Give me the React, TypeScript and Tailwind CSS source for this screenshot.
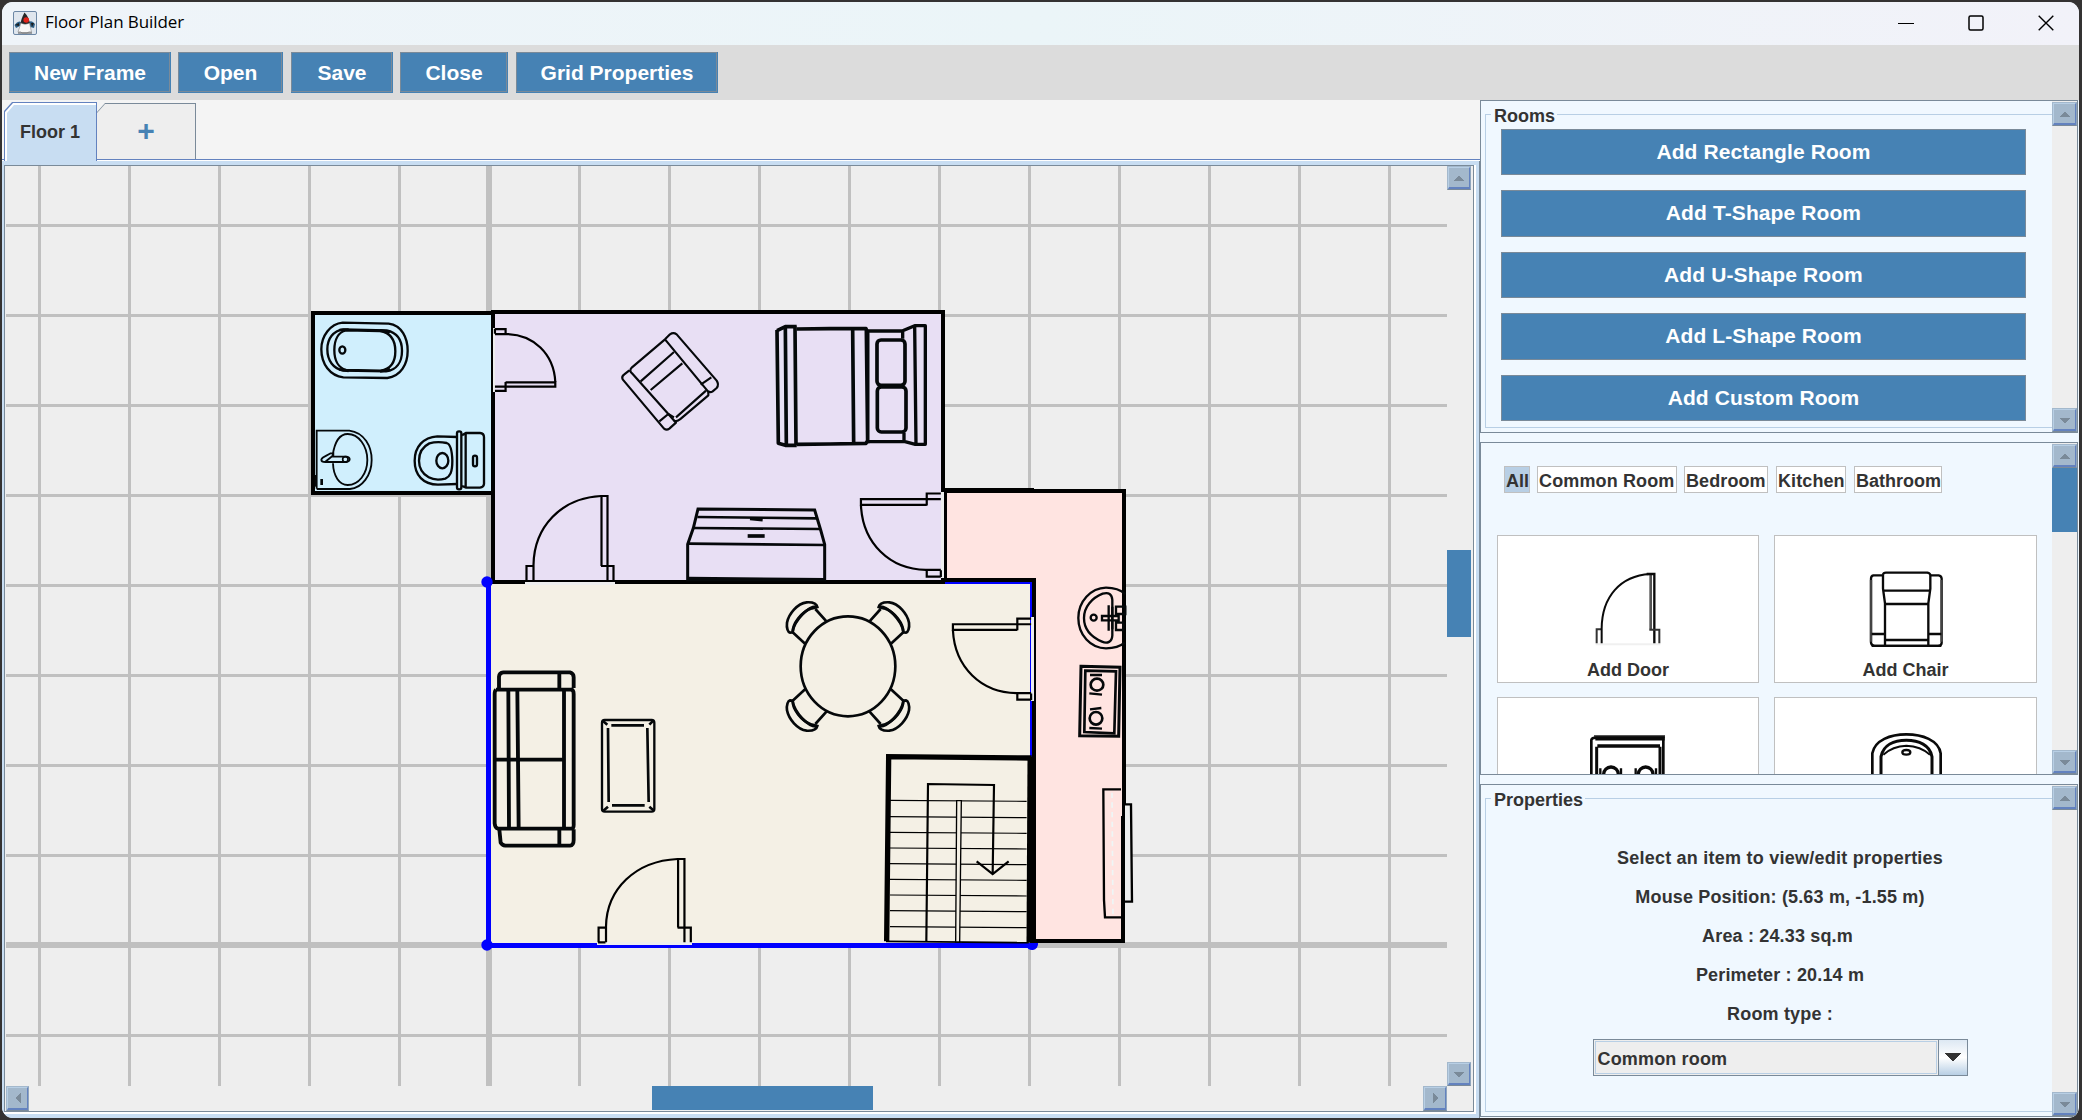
import React from "react";

const ROOM_BUTTONS = [
  { label: "Add Rectangle Room", cls: "h-[46px]" },
  { label: "Add T-Shape Room", cls: "h-[47px]" },
  { label: "Add U-Shape Room", cls: "h-[46px]" },
  { label: "Add L-Shape Room", cls: "h-[47px]" },
  { label: "Add Custom Room", cls: "h-[46px]" },
];

const TOOLBAR = [
  { label: "New Frame", cls: "w-[162px] mr-[7px]" },
  { label: "Open", cls: "w-[105px] mr-2" },
  { label: "Save", cls: "w-[102px] mr-[7px]" },
  { label: "Close", cls: "w-[108px] mr-2" },
  { label: "Grid Properties", cls: "w-[202px]" },
];

const FILTERS = [
  { label: "All", cls: "w-[26px] bg-[#b8cfe5] mr-[7px]" },
  { label: "Common Room", cls: "w-[140px] bg-white mr-[7px] tracking-[0.13px]" },
  { label: "Bedroom", cls: "w-[84px] bg-white mr-2 tracking-[0.1px]" },
  { label: "Kitchen", cls: "w-[70px] bg-white mr-2 tracking-[0.1px]" },
  { label: "Bathroom", cls: "w-[88px] bg-white" },
];

type Dir = "up" | "down" | "left" | "right";
const ARROWS: Record<Dir, string> = {
  up: "7,15 12,9.5 17,15",
  down: "6,9.5 18,9.5 12,15.5",
  left: "15,6 15,18 9.5,12",
  right: "9.5,6 9.5,18 15,12",
};

function ArrowButton({ dir, cls = "h-[24px] w-[25px]" }: { dir: Dir; cls?: string }) {
  return (
    <div className={`flex shrink-0 border border-l-[#a3b8cc] border-t-[#a3b8cc] border-r-[#8fa5bd] border-b-[#7a8a99] bg-[#a3b8cc] ${cls}`}>
      <div className="flex min-w-0 flex-1 items-center justify-center border border-b-2 border-l-[#b8cfe5] border-t-[#b8cfe5] border-r-[#6382bf] border-b-[#6382bf]">
        <svg viewBox="0 0 24 24" className="h-[24px] w-[24px] shrink-0" shapeRendering="crispEdges">
          <polygon points={ARROWS[dir]} fill="#7a8a99" />
        </svg>
      </div>
    </div>
  );
}

function VScroll({ thumb }: { thumb?: boolean }) {
  return (
    <div className="flex w-[25px] shrink-0 flex-col justify-between bg-[#eeeeee] pt-px">
      <div>
        <ArrowButton dir="up" />
        {thumb && <div className="h-[64px] bg-[#4682b4]" />}
      </div>
      <ArrowButton dir="down" />
    </div>
  );
}

/* Door in its own 90 x 86 box: jambs at the bottom, leaf at the right. */
function Door({ m }: { m: string }) {
  return (
    <g transform={m} fill="none" stroke="#000" strokeWidth="2.200">
      <path vectorEffect="non-scaling-stroke" d="M1.500 86V71H8" />
      <path vectorEffect="non-scaling-stroke" d="M8.500 86V70C9 32 36 3 76 1" />
      <path vectorEffect="non-scaling-stroke" d="M76.500 71V1H82.500V86" />
      <path vectorEffect="non-scaling-stroke" d="M76 71H88.500V86M1 86H8" />
    </g>
  );
}

function DiningChair() {
  return (
    <g>
      <path d="M148 485L182 447M212 552L250 517" />
      <path d="M176 441C178 432 190 426 208 427C236 430 262 462 267 488C269 505 264 517 258 518L250 517C251 493 225 455 192 445Z" />
      <path d="M180 440C200 438 244 478 250 515" />
    </g>
  );
}

function FloorPlan() {
  const v = Array.from({ length: 16 }, (_, i) => 38 + 90 * i);
  const h = Array.from({ length: 10 }, (_, i) => 224 + 90 * i);
  const steps = [241, 290, 337, 384, 431, 478, 525, 572, 620];
  return (
    <svg width="1441" height="920" viewBox="6 166 1441 920" className="block shrink-0 bg-[#eeeeee]">
      <g fill="#c0c0c0" shapeRendering="crispEdges">
        {v.map((x) => (
          <rect key={x} x={x === 488 ? 486 : x} y="166" width={x === 488 ? 6 : 3} height="920" />
        ))}
        {h.map((y) => (
          <rect key={y} x="6" y={y === 944 ? 942 : y} width="1441" height={y === 944 ? 6 : 3} />
        ))}
      </g>

      <g shapeRendering="crispEdges">
        <rect x="313" y="313" width="180" height="180" fill="#d0effd" stroke="#000" strokeWidth="4" />
        <path d="M488 582H1034V945H488Z" fill="#f4f0e5" />
        <path d="M945 491H1124V700L1123 941H1034V580H945Z" fill="#ffe4e1" stroke="#000" strokeWidth="4" />
        <rect x="943" y="488" width="91" height="2" />
        <rect x="493" y="312" width="450" height="270" fill="#e8dff4" stroke="#000" strokeWidth="4" />
        <path d="M488.500 582V945M488 945H1034" stroke="#0000ff" strokeWidth="5" fill="none" />
        <path d="M945 583H1031V910" stroke="#0000ff" strokeWidth="2" fill="none" />
        <path d="M943 580H1034V941" stroke="#000" strokeWidth="4" fill="none" />
        <rect x="1030" y="757" width="6" height="186" />
        <rect x="1122" y="640" width="4" height="76" />
        <rect x="493" y="328" width="2" height="64" fill="#eee" />
        <rect x="525" y="581" width="90" height="4" fill="#eee" />
        <rect x="525" y="580" width="90" height="2" />
        <rect x="941" y="492" width="3" height="86" fill="#eee" />
        <rect x="1031" y="617" width="3" height="84" fill="#eee" />
        <rect x="597" y="942" width="95" height="3" fill="#eee" />
      </g>
      <g fill="#0000ff">
        <circle cx="487" cy="582" r="5.700" />
        <circle cx="487" cy="945" r="5.700" />
        <path d="M1026 943H1038A6 6 0 0 1 1026 945Z" />
      </g>

      <Door m="translate(525 495)" />
      <Door m="matrix(1.06 0 0 .98 597 858)" />
      <Door m="matrix(0 .71 -.71 0 556 328)" />
      <Door m="matrix(0 -.955 .94 0 860 578)" />
      <Door m="matrix(0 -.93 .92 0 952 701)" />

      {/* Bathroom fixtures */}
      <g transform="translate(290 290) scale(.33333)" fill="none" stroke="#05080a" strokeWidth="7">
        <path d="M158 98L296 101C336 106 353 145 353 182C353 222 333 258 292 264L160 262C120 258 94 222 94 178C94 138 120 102 158 98Z" />
        <path d="M160 118L290 121C322 128 336 150 336 182C336 216 320 240 288 244L160 242C130 236 112 212 112 178C112 146 130 122 160 118Z" />
        <path d="M168 121L270 123C300 128 316 150 316 184C316 218 300 238 272 242L168 240C146 234 133 212 133 180C133 148 146 126 168 121Z" />
        <path d="M148 120L176 119M148 238L176 243M270 244L300 238M270 121L300 126" strokeWidth="8" />
        <ellipse cx="157" cy="180" rx="9" ry="11" />
        <path d="M80 596V422H178C224 428 245 470 245 510C245 556 216 594 180 597H80" strokeWidth="5.500" />
        <path d="M128 496C134 456 150 432 173 432C206 432 232 468 232 510C232 552 206 585 173 585C148 585 130 558 129 520" strokeWidth="5.500" />
        <path d="M94 509C96 500 110 498 122 490H130V500H170C182 502 182 514 170 516H106C98 516 94 514 94 509ZM106 515L130 496" strokeWidth="5.500" />
        <circle cx="166" cy="508" r="8" strokeWidth="5" />
        <path d="M95 567V585" strokeWidth="8" />
        <path d="M77 555V590" strokeWidth="6" />
        <path d="M502 441L442 439C400 442 374 470 374 512C374 556 400 584 444 584L502 582" />
        <path d="M470 459C480 462 486 474 487 512C487 548 480 560 466 566C450 570 430 570 416 562C396 550 387 534 387 512C387 490 398 470 418 460C436 455 456 456 470 459Z" />
        <ellipse cx="457" cy="512" rx="18" ry="23" />
        <rect x="501" y="424" width="13" height="174" rx="6" />
        <path d="M516 436L528 429H570Q582 430 582 442V582Q581 592 570 593H528L516 588M527 430V594" />
        <rect x="549" y="497" width="12" height="32" rx="6" />
      </g>

      {/* Bedroom furniture */}
      <g transform="translate(600 300) scale(.33333)" fill="none" stroke="#05080a" strokeWidth="11" strokeLinejoin="round">
        <path d="M531 92L556 80H590M531 90L535 430L556 436H590M556 82L559 436M585 78L588 436" />
        <path d="M590 87L690 86L755 86H798L803 98V422L798 430L690 432L590 433M758 88L761 432M799 88L803 430" />
        <path d="M804 93H908M804 425H912M908 116V92L944 77H976L976 433H946L912 424V398M944 78L948 434" strokeWidth="10" />
        <rect x="831" y="120" width="84" height="136" rx="12" />
        <rect x="832" y="261" width="86" height="135" rx="12" />
        <g strokeWidth="9" strokeLinejoin="miter">
          <path d="M294 627L644 630L662 690L674 733V839H263V733L280 684Z" />
          <path d="M292 651L652 655M280 684L660 687M264 731L675 735M264 834L675 838" strokeWidth="8" />
          <path d="M450 656L488 660" />
          <path d="M443 708H494" strokeWidth="11" />
        </g>
        <g strokeWidth="6.500">
          <path d="M195 118L210 103Q220 96 230 103L350 242Q358 254 350 264L338 274Q330 280 322 272L195 118L96 202Q86 212 96 220L205 342L228 368L208 386Q200 392 192 386L68 238Q64 230 72 224L88 211" />
          <path d="M122 244L222 156M152 270L247 190M228 352L318 272M222 362Q232 366 240 358L325 286V272M302 254L334 232M178 364L205 342L222 352" />
        </g>
      </g>

      {/* Dining set */}
      <g transform="translate(820 460) scale(.33333)" fill="none" stroke="#05080a" strokeWidth="8">
        <ellipse cx="84" cy="619" rx="142" ry="150" />
        <DiningChair />
        <g transform="translate(0 1239) scale(1 -1)">
          <DiningChair />
        </g>
        <g transform="translate(168 0) scale(-1 1)">
          <DiningChair />
        </g>
        <g transform="translate(168 1239) scale(-1 -1)">
          <DiningChair />
        </g>
        {/* Kitchen sink and hob */}
        <g strokeWidth="7">
          <path d="M916 402C900 388 880 383 858 383C812 384 775 425 775 474C775 525 812 565 858 565C880 565 900 560 914 548" />
          <path d="M848 401C866 396 876 402 877 420V526C876 546 862 552 846 545C816 532 792 508 792 474C792 440 816 414 848 401Z" />
          <circle cx="821" cy="473" r="9" />
          <path d="M846 468H896V481H846ZM866 436V512M888 440H916V462H888ZM888 488H910V510H888ZM877 440V508" />
        </g>
        <g strokeWidth="9" strokeLinejoin="miter">
          <path d="M783 619L900 622L896 829L779 827Z" />
          <path d="M796 632L888 634L883 820L793 816Z" strokeWidth="8" />
          <g strokeWidth="8">
            <ellipse cx="831" cy="674" rx="19" ry="18" />
            <ellipse cx="828" cy="775" rx="19" ry="19" />
            <path d="M810 645H846M808 700L846 704M810 748L844 744M808 804L846 806" strokeWidth="7" />
          </g>
        </g>
      </g>

      {/* Sofa and coffee table */}
      <g transform="translate(470 560) scale(.33333)" fill="none" stroke="#05080a" strokeWidth="11.500">
        <path d="M87 388V350Q88 338 100 337H300Q311 340 311 352V384M268 340V388M78 389H306" />
        <path d="M78 389Q74 392 74 402V790Q75 804 84 806H306Q312 804 311 790V402Q311 390 304 388" />
        <path d="M115 392L117 802M142 392L146 802M282 392V802M76 599H282" />
        <path d="M88 808L92 848Q96 856 106 857H300Q311 856 311 840V808M268 808V855" />
        <g strokeWidth="7">
          <rect x="396" y="480" width="157" height="275" rx="8" />
          <path d="M414 504L416 726M532 504L536 726M424 496H522M426 736H524M398 482L412 494M550 482L538 494M400 752L414 740M552 752L538 740" strokeWidth="8" />
        </g>
      </g>

      {/* Staircase and wall counter */}
      <g transform="translate(860 720) scale(.33333)" fill="none" stroke="#000">
        <path d="M80 664L86 110L515 114" strokeWidth="16" />
        <path d="M509 114L506 668" strokeWidth="13" />
        <path d="M78 664L506 668" strokeWidth="5" />
        {steps.map((y) => (
          <path key={y} d={`M90 ${y}L500 ${y + 3}`} strokeWidth="3.600" />
        ))}
        <path d="M290 242L287 666H299L304 242Z" fill="#f4f0e5" strokeWidth="4" />
        <path d="M199 664L204 192L402 195L398 462M350 424L398 462L446 424" strokeWidth="6.500" />
        <path d="M783 208H730L732 540L735 592H783" strokeWidth="7" />
        <path d="M795 253H813L816 545H795" fill="#eeeeee" strokeWidth="7" />
        <path d="M756 218L759 588" stroke="#eef6f6" strokeWidth="5" strokeDasharray="16 13" />
      </g>
    </svg>
  );
}

const ink = "#0a0a0a";

const DoorIcon = () => (
  <svg viewBox="60 33 228 228" className="h-[76px] w-[76px] shrink-0" fill="none" stroke={ink}>
    <path d="M77 253H271" stroke="#f0f0f0" strokeWidth="6" />
    <path d="M80 250V208H94" stroke="#333" strokeWidth="6" />
    <path d="M95 250V205C96 110 150 48 240 42" strokeWidth="6" />
    <path d="M242 208V42" stroke="#555" strokeWidth="8" />
    <path d="M230 42H253V250" strokeWidth="7" />
    <path d="M238 209H268V250" stroke="#333" strokeWidth="6" />
  </svg>
);

const ChairIcon = () => (
  <svg viewBox="892 33 228 228" className="h-[76px] w-[76px] shrink-0" fill="none" stroke={ink} strokeWidth="7">
    <path d="M938 46H908Q901 48 901 56V248Q902 257 912 258H1102Q1113 257 1113 248V56Q1112 47 1104 46H1078" />
    <path d="M901 60V245M1113 60V245" stroke="#444" />
    <path d="M937 44Q938 38 946 38H1070Q1079 40 1079 46V86L1073 130V258M937 44V86L943 130V258" />
    <path d="M938 92H1078" />
    <path d="M943 132H1073M903 222H943M1073 222H1112M943 240H1073M903 258H1112" strokeWidth="8" />
  </svg>
);

const StoveIcon = () => (
  <svg viewBox="60 519 228 228" className="h-[76px] w-[76px] shrink-0" fill="none" stroke={ink}>
    <path d="M72 529H285" stroke="#555" strokeWidth="8" />
    <path d="M64 740V540Q66 533 80 533H280V740" strokeWidth="8" />
    <path d="M76 536H284M82 558H270" strokeWidth="11" />
    <path d="M80 740V560M270 740V560" strokeWidth="9" />
    <circle cx="123" cy="643" r="22" strokeWidth="10" />
    <circle cx="227" cy="643" r="22" strokeWidth="10" />
    <path d="M91 625V700M153 625V700M197 625V700M258 625V700" strokeWidth="7" />
  </svg>
);

const TubIcon = () => (
  <svg viewBox="892 519 228 228" className="h-[76px] w-[76px] shrink-0" fill="none" stroke={ink} strokeWidth="8">
    <path d="M905 740V580C912 540 960 523 1007 523C1054 523 1104 540 1110 580V740" />
    <path d="M931 740V590C938 555 970 541 1007 541C1044 541 1078 555 1084 590V740" strokeWidth="9" />
    <path d="M938 584C960 564 980 558 1007 557C1034 558 1056 564 1078 584" strokeWidth="6" />
    <ellipse cx="1007" cy="577" rx="12" ry="7" strokeWidth="7" />
  </svg>
);

const ITEMS = [
  { id: "door", label: "Add Door", Icon: DoorIcon },
  { id: "chair", label: "Add Chair", Icon: ChairIcon },
  { id: "stove", label: "", Icon: StoveIcon },
  { id: "tub", label: "", Icon: TubIcon },
];

function DukeIcon() {
  return (
    <svg viewBox="0 0 24 24" className="h-[24px] w-[24px]">
      <rect x=".5" y=".5" width="23" height="23" rx="1.500" fill="#dfe6ee" stroke="#6c87a5" />
      <path d="M1.500 14Q5 9 8 11L7 15L3 17ZM22 13Q19 9 16 11L17 16L21 17Z" fill="#2d5f86" />
      <path d="M2 14L6 12V15ZM21 12L18 12L19 16Z" fill="#1c1c1c" />
      <path d="M11.500 1.500Q8 8 7.500 13H17Q16 6 11.500 1.500Z" fill="#262626" />
      <path d="M8 12Q12 15 16.500 12L18.500 21Q16 20 14 22H9Q8 20 5 21Z" fill="#f7f7f7" stroke="#888" strokeWidth=".6" />
      <circle cx="13.200" cy="9" r="2.800" fill="#e2231a" />
      <path d="M5 22H19" stroke="#555" />
    </svg>
  );
}

function TitledBox({ title, children }: { title: string; children: React.ReactNode }) {
  return (
    <div className="mb-[4px] ml-[4px] mt-[13px] flex min-w-0 flex-1 flex-col border-y border-l border-[#b8cfe5]">
      <div className="-mt-[12px] ml-[5px] h-[24px] self-start bg-[#f0f8ff] pl-[3px] pr-[2px] text-[18px] leading-[26px]">{title}</div>
      {children}
    </div>
  );
}

const panel = "flex h-[333px] w-[598px] shrink-0 overflow-hidden border border-[#7a8a99] bg-[#f0f8ff]";

export default function App() {
  return (
    <div className="h-[1120px] w-[2082px] overflow-hidden bg-[#343232] pb-[2px] pl-[2px] pr-[3px] pt-[2px] font-['Liberation_Sans',Arial,sans-serif] font-bold text-[#333333]">
      <div className="flex h-full flex-col overflow-hidden rounded-[11px] bg-[#f0f8ff]">
        <header className="flex h-[43px] shrink-0 items-center bg-linear-to-r from-[#eff4f9] via-[#ebf5f8] to-[#f2f2f9] pb-[2px] pl-[11px] pr-[25px]">
          <DukeIcon />
          <span className="-mt-px ml-[8px] font-['Open_Sans','Noto_Sans',sans-serif] text-[17px] font-normal tracking-[-0.08px] text-black">Floor Plan Builder</span>
          <div className="ml-auto flex items-center gap-[54px] text-black">
            <svg viewBox="0 0 16 16" className="h-4 w-4" stroke="currentColor" shapeRendering="crispEdges"><path d="M0 8.500H16" /></svg>
            <svg viewBox="0 0 16 16" className="h-4 w-4" fill="none" stroke="currentColor" strokeWidth="1.500"><rect x="1" y="1" width="14" height="14" rx="1.500" /></svg>
            <svg viewBox="0 0 16 16" className="h-4 w-4" stroke="currentColor" strokeWidth="1.400"><path d="M.7.7L15.300 15.300M15.300.7L.7 15.300" /></svg>
          </div>
        </header>

        <nav className="flex h-[55px] shrink-0 items-start bg-[#dcdcdc] pl-[7px] pt-[7px]">
          {TOOLBAR.map((b) => (
            <button key={b.label} className={`h-[41px] bg-[#4682b4] pb-px pr-px ${b.cls}`}>
              <span className="flex h-full items-center justify-center border border-[#7a8a99] pl-px text-[21px] leading-none text-white">{b.label}</span>
            </button>
          ))}
        </nav>

        <main className="flex min-h-0 flex-1">
          <section className="flex w-[1478px] shrink-0 flex-col bg-[#c8ddf2]">
            <div className="flex h-[61px] shrink-0 items-end border-b border-white bg-[#f4f4f4]">
              <div className="flex h-full w-full items-end border-b border-[#6382bf] pl-[2px]">
                <div className="z-10 -mb-[2px] h-[59px] w-[93px] bg-[#6382bf] pl-px pr-px pt-px [clip-path:polygon(8px_0,100%_0,100%_100%,0_100%,0_9px)]">
                  <div className="h-full bg-white pl-[2px] pt-[2px] [clip-path:polygon(8px_0,100%_0,100%_100%,0_100%,0_9px)]">
                    <div className="flex h-full items-center bg-[#c8ddf2] pb-[2px] pl-[13px] text-[18px] [clip-path:polygon(7px_0,100%_0,100%_100%,0_100%,0_8px)]">Floor 1</div>
                  </div>
                </div>
                <div className="h-[56px] w-[99px] bg-[#7a8a99] pr-px pt-px [clip-path:polygon(8px_0,100%_0,100%_100%,0_100%,0_9px)]">
                  <div className="flex h-full items-center justify-center bg-[#eeeeee] pb-[2px] text-[30px] leading-none text-[#4682b4] [clip-path:polygon(8px_0,100%_0,100%_100%,0_100%,0_9px)]">+</div>
                </div>
              </div>
            </div>
            <div className="flex flex-1 border-r border-[#7a8a99]">
              <div className="ml-[2px] mr-[3px] mt-[4px] flex h-[949px] flex-1 border-b-2 border-r-2 border-white">
                <div className="flex w-full flex-col border border-[#7a8a99] bg-[#eeeeee] pl-px">
                  <div className="flex h-[920px]">
                    <FloorPlan />
                    <div className="flex flex-1 flex-col bg-[#eeeeee]">
                      <ArrowButton dir="up" cls="h-[24px] w-[24px]" />
                      <div className="mt-[360px] h-[87px] w-[24px] bg-[#4682b4]" />
                      <ArrowButton dir="down" cls="mt-auto h-[24px] w-[24px]" />
                    </div>
                  </div>
                  <div className="flex h-[25px]">
                    <ArrowButton dir="left" cls="h-[25px] w-[23px]" />
                    <div className="ml-[623px] h-[24px] w-[221px] bg-[#4682b4]" />
                    <ArrowButton dir="right" cls="ml-[550px] h-[25px] w-[24px]" />
                  </div>
                </div>
              </div>
            </div>
          </section>

          <aside className="flex flex-1 flex-col gap-[9px]">
            <section className={panel}>
              <TitledBox title="Rooms">
                <div className="ml-[15px] mt-[2px] flex w-[525px] flex-col gap-[15px]">
                  {ROOM_BUTTONS.map((b) => (
                    <button key={b.label} className={`shrink-0 border border-[#7a8a99] bg-[#4682b4] pb-[2px] text-[21px] leading-none tracking-[0.1px] text-white ${b.cls}`}>{b.label}</button>
                  ))}
                </div>
              </TitledBox>
              <VScroll />
            </section>

            <section className={panel}>
              <div className="flex min-w-0 flex-1 flex-col pl-[16px] pt-[23px]">
                <div className="ml-[7px] flex h-[27px] text-[18px]">
                  {FILTERS.map((f) => (
                    <div key={f.label} className={`h-[27px] whitespace-nowrap border border-[#c0c0c0] pl-px leading-[29px] ${f.cls}`}>{f.label}</div>
                  ))}
                </div>
                <div className="mt-[42px] grid w-[540px] grid-cols-[262px_263px] gap-x-[15px] gap-y-[14px]">
                  {ITEMS.map(({ id, label, Icon }) => (
                    <div key={id} className="flex h-[148px] flex-col items-center border border-[#c0c0c0] bg-white pt-[35px] text-[18px]">
                      <Icon />
                      {label && <span className="mt-[12px] leading-[22px]">{label}</span>}
                    </div>
                  ))}
                </div>
              </div>
              <VScroll thumb />
            </section>

            <section className={panel}>
              <TitledBox title="Properties">
                <div className="ml-[17px] mt-[28px] flex w-[554px] flex-col items-center text-[18px] leading-[39px] tracking-[0.16px]">
                  <span className="tracking-[0.24px]">Select an item to view/edit properties</span>
                  <span>Mouse Position: (5.63 m, -1.55 m)</span>
                  <span className="pr-[5px]">Area : 24.33 sq.m</span>
                  <span>Perimeter : 20.14 m</span>
                  <span>Room type :</span>
                  <div className="mt-[5px] flex h-[37px] w-[375px] border border-[#7a8a99] bg-[#eeeeee]">
                    <div className="m-px flex flex-1 items-center border border-[#b8cfe5] pl-[2px] pt-[2px] leading-none">Common room</div>
                    <div className="flex w-[29px] items-center justify-center border-l border-[#7a8a99] bg-linear-to-b from-[#dde8f3] via-white to-[#b8cfe5]">
                      <svg viewBox="0 0 16 9" className="h-[9px] w-4" shapeRendering="crispEdges"><polygon points="0,0 16,0 8,8.500" fill="#333" /></svg>
                    </div>
                  </div>
                </div>
              </TitledBox>
              <VScroll />
            </section>
          </aside>
        </main>
      </div>
    </div>
  );
}
